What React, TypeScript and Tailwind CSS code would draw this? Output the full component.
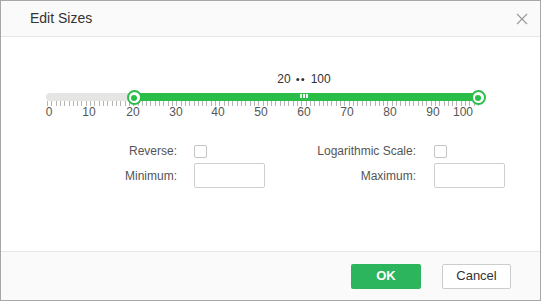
import React from "react";

const ticks = Array.from({ length: 101 }, (_, i) => i);
const labels: [string, number][] = [
  ["0", 49],
  ["10", 89],
  ["20", 133],
  ["30", 176],
  ["40", 218],
  ["50", 261],
  ["60", 304],
  ["70", 347],
  ["80", 390],
  ["90", 433],
  ["100", 463],
];

function Handle({ left }: { left: number }) {
  return (
    <div
      className="absolute top-[20px] w-[15px] h-[15px] rounded-full bg-white border-[2px] border-[#2abe48] flex items-center justify-center"
      style={{ left: left - 7.5 }}
    >
      <div className="w-[6px] h-[6px] rounded-full bg-[#2abe48]" />
    </div>
  );
}

function Slider() {
  // origin x = 40 (page), y = 70
  return (
    <div className="relative w-[460px] h-[50px] ml-[39px]">
      <div className="absolute top-[2px] left-[264px] -translate-x-1/2 whitespace-nowrap text-[12px] leading-[14px] text-[#333] flex items-center gap-[6px]">
        <span>20</span>
        <span className="flex gap-[2px]">
          <span className="w-[3px] h-[3px] rounded-full bg-[#333]" />
          <span className="w-[3px] h-[3px] rounded-full bg-[#333]" />
        </span>
        <span>100</span>
      </div>
      {/* track */}
      <div className="absolute left-[6px] top-[23px] w-[434px] h-[8px] rounded-l-full bg-[#e5e5e3]" />
      <div className="absolute left-[94px] top-[23px] w-[344px] h-[8px] bg-[#2abe48]" />
      {/* grip */}
      <div className="absolute left-[260px] top-[24px] h-[4px] flex gap-[1px]">
        <div className="w-[2px] h-[4px] bg-white" />
        <div className="w-[2px] h-[4px] bg-white" />
        <div className="w-[2px] h-[4px] bg-white" />
      </div>
      {/* ticks */}
      {ticks.map((v) => (
        <div
          key={v}
          className="absolute top-[31px] w-[1px] h-[5px] bg-[#b5b5b5]"
          style={{ left: 7 + 4.31 * v }}
        />
      ))}
      {labels.map(([t, x]) => (
        <div
          key={t}
          className="absolute top-[35px] -translate-x-1/2 text-[12px] leading-[14px] text-[#555]"
          style={{ left: x - 40 }}
        >
          {t}
        </div>
      ))}
      <Handle left={94} />
      <Handle left={438} />
    </div>
  );
}

export default function App() {
  return (
    <div
      className="w-[542px] h-[302px] bg-white"
      style={{ fontFamily: '"Liberation Sans", Arial, sans-serif' }}
    >
      <div className="w-[541px] h-[301px] border border-[#a6a6a6] flex flex-col bg-white">
        <div className="h-[36px] shrink-0 bg-[#fafafa] border-b border-[#e6e6e6] flex items-center justify-between pl-[29px] pr-[12px]">
          <span className="text-[14px] text-[#333]">Edit Sizes</span>
          <svg width="12" height="12" viewBox="0 0 12 12">
            <path d="M1 1L11 11M11 1L1 11" stroke="#999" strokeWidth="1.1" />
          </svg>
        </div>
        <div className="flex-1 pt-[33px]">
          <Slider />
          <div className="mt-[21px] ml-[96px] grid grid-cols-[97px_72px_168px_72px] grid-rows-[20px_25px] gap-y-[2px] text-[12px] text-[#555]">
            <div className="flex items-center justify-end pr-[17px]">Reverse:</div>
            <div className="flex items-center">
              <div className="w-[13px] h-[13px] rounded-[2px] border border-[#c4c4c4] bg-white" />
            </div>
            <div className="flex items-center justify-end pr-[18px]">Logarithmic Scale:</div>
            <div className="flex items-center">
              <div className="w-[13px] h-[13px] rounded-[2px] border border-[#c4c4c4] bg-white" />
            </div>
            <div className="flex items-center justify-end pr-[17px]">Minimum:</div>
            <div className="border border-[#cfcfcf] rounded-[2px] w-[71px] h-[25px] bg-white" />
            <div className="flex items-center justify-end pr-[18px]">Maximum:</div>
            <div className="border border-[#cfcfcf] rounded-[2px] w-[71px] h-[25px] bg-white" />
          </div>
        </div>
        <div className="h-[49px] shrink-0 bg-[#fafafa] border-t border-[#e6e6e6] flex items-center justify-end gap-[21px] pr-[29px]">
          <button className="w-[70px] h-[25px] rounded-[2px] bg-[#2db55d] text-white text-[13px] font-bold">
            OK
          </button>
          <button className="w-[69px] h-[25px] rounded-[2px] bg-white border border-[#cccccc] text-[#333] text-[13px]">
            Cancel
          </button>
        </div>
      </div>
    </div>
  );
}
